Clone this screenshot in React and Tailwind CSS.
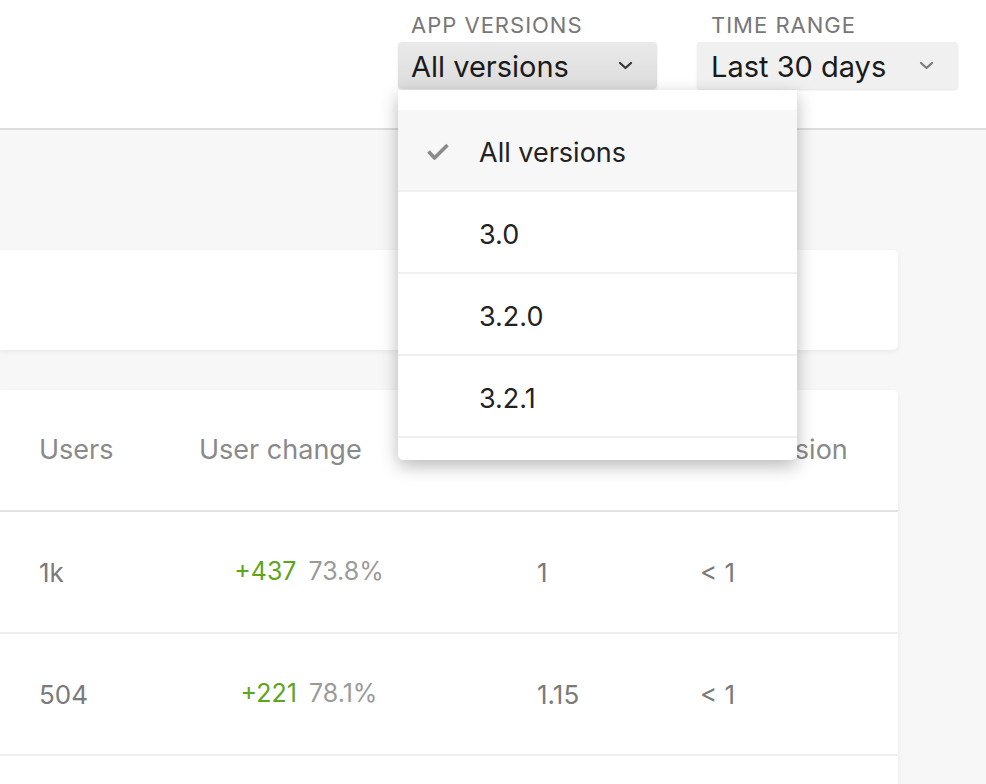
import { useState } from 'react';

const versions = ['All versions', '3.0', '3.2.0', '3.2.1'];

const rows = [
  { users: '1k', change: '+437', pct: '73.8%', sessions: '1', crashes: '< 1' },
  { users: '504', change: '+221', pct: '78.1%', sessions: '1.15', crashes: '< 1' },
];

const Chevron = ({ className }) => (
  <svg className={className} width="15" height="9" viewBox="0 0 15 9" fill="none">
    <path d="M2 2l5.5 5 5.5-5" stroke="currentColor" strokeWidth={2.2} strokeLinecap="round" strokeLinejoin="round" />
  </svg>
);

const App = () => {
  const [selected, setSelected] = useState('All versions');
  const [open, setOpen] = useState(true);

  return (
    <div className="w-[986px] h-[784px] overflow-hidden bg-[#f7f7f7] font-['Inter','Open_Sans',sans-serif]">
      {/* Header with filters */}
      <header className="h-[130px] bg-white border-b-2 border-[#dddddd] flex justify-end items-start pt-[12px] pr-[28px] gap-[40px]">
        <div className="relative w-[259px]">
          <p className="pl-[13px] text-[22px] leading-[26px] text-[#777777] tracking-[1px]">APP VERSIONS</p>
          <button
            onClick={() => setOpen(!open)}
            className="mt-[4px] w-full h-[47px] flex items-center justify-between pl-[13px] pr-[24px] rounded-[4px] bg-gradient-to-b from-[#eaeaea] to-[#dcdcdc] shadow-[0_1px_2px_rgba(0,0,0,0.12)] text-[29px] leading-[36px] text-[#1a1a1a]"
          >
            <span className="pt-[2px]">{selected}</span>
            <Chevron className="text-[#333333]" />
          </button>

          {open && (
            <div className="absolute z-10 left-0 top-[78px] w-[399px] bg-white rounded-b-[5px] pt-[20px] h-[370px] overflow-hidden shadow-[0_6px_18px_rgba(0,0,0,0.28)]">
              {versions.map((v) => (
                <div
                  key={v}
                  onClick={() => setSelected(v)}
                  className={`h-[82px] flex items-center border-b-2 border-[#f0f0f0] text-[27px] leading-[32px] text-[#222222] ${
                    v === selected ? 'bg-[#f7f7f7]' : 'bg-white'
                  }`}
                >
                  <div className="w-[81px] pl-[28px] pt-[4px]">
                    {v === selected && (
                      <svg width="24" height="18" viewBox="0 0 24 18" fill="none">
                        <path d="M2.5 8.5l6 6.5L21.5 2" stroke="#8a8a8a" strokeWidth={3.6} strokeLinejoin="round" />
                      </svg>
                    )}
                  </div>
                  <span className="pt-[5px]">{v}</span>
                </div>
              ))}
            </div>
          )}
        </div>

        <div className="w-[261px]">
          <p className="pl-[14px] text-[22px] leading-[26px] text-[#777777] tracking-[1px]">TIME RANGE</p>
          <button className="mt-[4px] w-full h-[47px] flex items-center justify-between pl-[14px] pr-[24px] rounded-[4px] bg-[#f0f0f0] shadow-[0_1px_2px_rgba(0,0,0,0.12)] text-[29px] leading-[36px] text-[#1a1a1a]">
            <span className="pt-[2px]">Last 30 days</span>
            <Chevron className="text-[#7a7a7a]" />
          </button>
        </div>
      </header>

      {/* Content */}
      <main className="pt-[120px] pr-[88px]">
        <div className="h-[100px] bg-white rounded-r-[5px] shadow-[0_2px_5px_rgba(0,0,0,0.06)]" />

        <div className="mt-[40px] bg-white rounded-tr-[5px] shadow-[0_2px_5px_rgba(0,0,0,0.06)]">
          <div className="h-[122px] border-b-2 border-[#e2e2e2] grid grid-cols-[160px_338px_163px_1fr] items-center pl-[39px] text-[27px] text-[#8a8a8a]">
            <span>Users</span>
            <span>User change</span>
            <span>Sessions</span>
            <span>Per session</span>
          </div>
          {rows.map((r) => (
            <div
              key={r.users}
              className="h-[122px] border-b-2 border-[#eeeeee] grid grid-cols-[160px_338px_163px_1fr] items-center pl-[39px] text-[26px] text-[#7a7a7a]"
            >
              <span>{r.users}</span>
              <div className="w-[220px] text-center text-[25px]">
                <span className="text-[#5ca61c]">{r.change}</span>
                <span className="ml-[12px] text-[#9a9a9a]">{r.pct}</span>
              </div>
              <span>{r.sessions}</span>
              <span>{r.crashes}</span>
            </div>
          ))}
          <div className="h-[122px]" />
        </div>
      </main>
    </div>
  );
};

export default App;
